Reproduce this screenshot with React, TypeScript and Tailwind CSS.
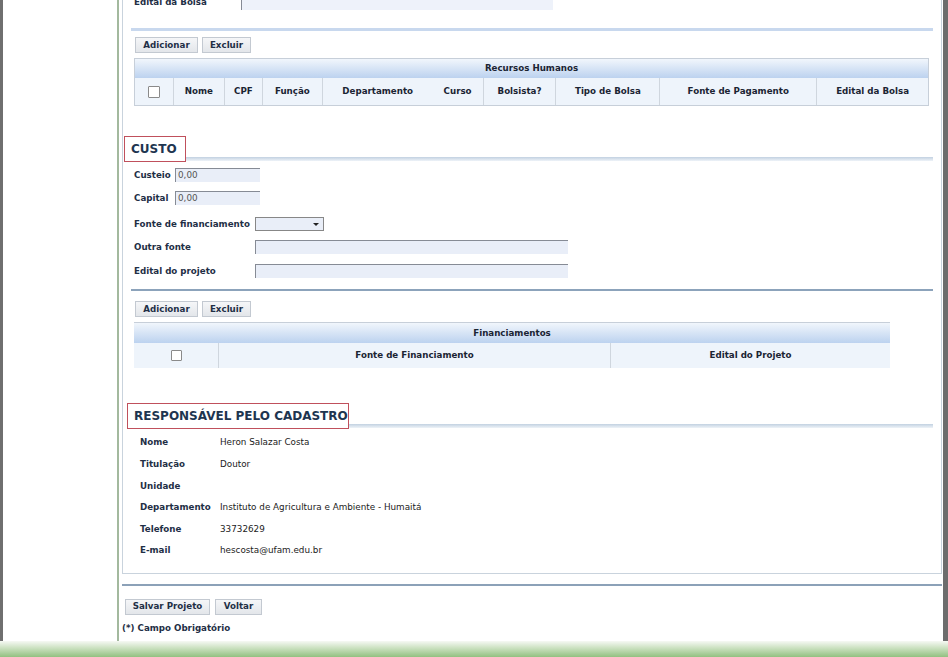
import React from "react";

function Btn({ w, children }: { w: string; children: React.ReactNode }) {
  return (
    <div
      className={`${w} h-[16px] flex items-center justify-center border border-[#c3c9d1] bg-[linear-gradient(to_bottom,#f5f6f8,#e3e6ea)] text-[8.7px] font-bold text-[#1f2f46] leading-none`}
    >
      {children}
    </div>
  );
}

function Check({ s }: { s: string }) {
  return <div className={`${s} border border-[#8a8a8a] bg-white rounded-[1px]`} />;
}

function Heading({ w, children }: { w: string; children: React.ReactNode }) {
  return (
    <div className="flex items-end">
      <div
        className={`${w} h-[26px] flex items-center px-[6px] border border-[#c0505c] text-[12px] font-bold text-[#1e3550] leading-none whitespace-nowrap`}
      >
        {children}
      </div>
      <div className="flex-1 h-[4px] mb-[1px] bg-[linear-gradient(to_bottom,#c2d1e1,#eef3f8)]" />
    </div>
  );
}

function Input({ w, value }: { w: string; value?: string }) {
  return (
    <div
      className={`${w} h-[14px] bg-[#e9eef8] border-l border-t border-[#868b95] flex items-center pl-[2px] text-[8.8px] font-normal text-[#555] leading-none`}
    >
      {value}
    </div>
  );
}

export default function App() {
  const rhCols: [string, string][] = [
    ["Nome", "w-[51px]"],
    ["CPF", "w-[38px]"],
    ["Função", "w-[60px]"],
    ["Departamento", "w-[111px]"],
    ["Curso", "w-[50px]"],
    ["Bolsista?", "w-[73px]"],
    ["Tipo de Bolsa", "w-[104px]"],
    ["Fonte de Pagamento", "w-[157px]"],
    ["Edital da Bolsa", "w-[112px]"],
  ];
  const resp: [string, string][] = [
    ["Nome", "Heron Salazar Costa"],
    ["Titulação", "Doutor"],
    ["Unidade", ""],
    ["Departamento", "Instituto de Agricultura e Ambiente - Humaitá"],
    ["Telefone", "33732629"],
    ["E-mail", "hescosta@ufam.edu.br"],
  ];
  return (
    <div className="w-[948px] h-[657px] overflow-hidden flex flex-col bg-white font-['DejaVu_Sans',sans-serif] text-[#1f2f46]">
      <div className="flex h-[641px]">
        <div className="w-[3px] bg-[#6f6f6f]" />
        <div className="w-[114px]" />
        <div className="w-[2px] bg-[#a3b99e]" />
        <div className="w-[3px]" />
        <div className="w-[821px] flex flex-col">
          {/* Panel */}
          <div className="w-[820px] border-x border-b border-[#c9d3dd] flex flex-col pb-[11px]">
            {/* Edital da Bolsa (cut) */}
            <div className="mt-[-6px] h-[16px] flex items-center pl-[11px]">
              <div className="w-[107px] text-[8.7px] font-bold leading-none">Edital da Bolsa</div>
              <div className="w-[312px] h-[15px] bg-[#eef2fa] border-l border-[#868b95]" />
            </div>
            <div className="mt-[18px] ml-[8px] mr-[8px] h-[3px] bg-[#c8d8ee]" />
            <div className="mt-[6px] ml-[12px] flex gap-[4px]">
              <Btn w="w-[63px]">Adicionar</Btn>
              <Btn w="w-[49px]">Excluir</Btn>
            </div>
            {/* Recursos Humanos table */}
            <div className="mt-[5px] ml-[11px] w-[795px] border border-[#c7cfd9] text-[8.7px] font-bold text-[#1b2433] leading-none">
              <div className="h-[19px] flex items-center justify-center bg-[linear-gradient(to_bottom,#f1f6fc,#bcd2ef)]">
                Recursos Humanos
              </div>
              <div className="h-[27px] flex bg-[#eef4fb]">
                <div className="w-[38px] flex items-center justify-center">
                  <Check s="w-[12px] h-[12px]" />
                </div>
                {rhCols.map(([t, w]) => (
                  <div
                    key={t}
                    className={`${w} flex items-center justify-center whitespace-nowrap ${
                      t === "Curso" ? "" : "border-l border-[#cfd6de]"
                    }`}
                  >
                    {t}
                  </div>
                ))}
              </div>
            </div>

            {/* CUSTO */}
            <div className="mt-[30px] ml-[1px] mr-[8px]">
              <Heading w="w-[62px]">CUSTO</Heading>
            </div>
            <div className="mt-[6px] ml-[11px] flex items-center text-[8.7px] font-bold leading-none">
              <div className="w-[41px]">Custeio</div>
              <Input w="w-[85px]" value="0,00" />
            </div>
            <div className="mt-[9px] ml-[11px] flex items-center text-[8.7px] font-bold leading-none">
              <div className="w-[41px]">Capital</div>
              <Input w="w-[85px]" value="0,00" />
            </div>
            <div className="mt-[12px] ml-[11px] flex items-center text-[8.7px] font-bold leading-none">
              <div className="w-[121px] whitespace-nowrap">Fonte de financiamento</div>
              <div className="w-[69px] h-[14px] bg-[#e9eef8] border border-[#878787] flex items-center justify-end pr-[4px]">
                <div className="w-0 h-0 border-l-[3px] border-r-[3px] border-t-[3px] border-l-transparent border-r-transparent border-t-[#222]" />
              </div>
            </div>
            <div className="mt-[9px] ml-[11px] flex items-center text-[8.7px] font-bold leading-none">
              <div className="w-[121px]">Outra fonte</div>
              <Input w="w-[313px]" />
            </div>
            <div className="mt-[10px] ml-[11px] flex items-center text-[8.7px] font-bold leading-none">
              <div className="w-[121px]">Edital do projeto</div>
              <Input w="w-[313px]" />
            </div>
            <div className="mt-[11px] ml-[8px] mr-[8px] h-[2px] bg-[#8ca3bb]" />
            <div className="mt-[10px] ml-[12px] flex gap-[4px]">
              <Btn w="w-[63px]">Adicionar</Btn>
              <Btn w="w-[49px]">Excluir</Btn>
            </div>
            {/* Financiamentos table */}
            <div className="mt-[5px] ml-[11px] w-[756px] border-t border-[#c7cfd9] text-[8.7px] font-bold text-[#1b2433] leading-none">
              <div className="h-[20px] flex items-center justify-center bg-[linear-gradient(to_bottom,#f1f6fc,#bcd2ef)]">
                Financiamentos
              </div>
              <div className="h-[25px] flex bg-[#eef4fb]">
                <div className="w-[84px] flex items-center justify-center">
                  <Check s="w-[11px] h-[11px]" />
                </div>
                <div className="w-[392px] flex items-center justify-center border-l border-[#cfd6de]">
                  Fonte de Financiamento
                </div>
                <div className="w-[280px] flex items-center justify-center border-l border-[#cfd6de]">
                  Edital do Projeto
                </div>
              </div>
            </div>

            {/* Responsável */}
            <div className="mt-[35px] ml-[4px] mr-[8px]">
              <Heading w="w-[222px]">RESPONSÁVEL PELO CADASTRO</Heading>
            </div>
            <div className="mt-[3px] flex flex-col">
              {resp.map(([l, v]) => (
                <div key={l} className="h-[21.6px] flex items-center pl-[17px] leading-none">
                  <div className="w-[80px] text-[8.7px] font-bold">{l}</div>
                  <div className="text-[8.8px] text-[#222]">{v}</div>
                </div>
              ))}
            </div>
          </div>
          <div className="mt-[10px] w-[820px] h-[2px] bg-[#8ca1b8]" />
          <div className="mt-[13px] ml-[3px] flex gap-[5px]">
            <Btn w="w-[85px]">Salvar Projeto</Btn>
            <Btn w="w-[47px]">Voltar</Btn>
          </div>
          <div className="mt-[8px] h-[12px] flex items-center text-[8.7px] font-bold leading-none">
            (*) Campo Obrigatório
          </div>
        </div>
        <div className="w-[5px] bg-[#6d6d6d]" />
      </div>
      <div className="h-[16px] bg-[linear-gradient(to_bottom,#f6f9f4,#cfe3c5_40%,#92c180)]" />
    </div>
  );
}
